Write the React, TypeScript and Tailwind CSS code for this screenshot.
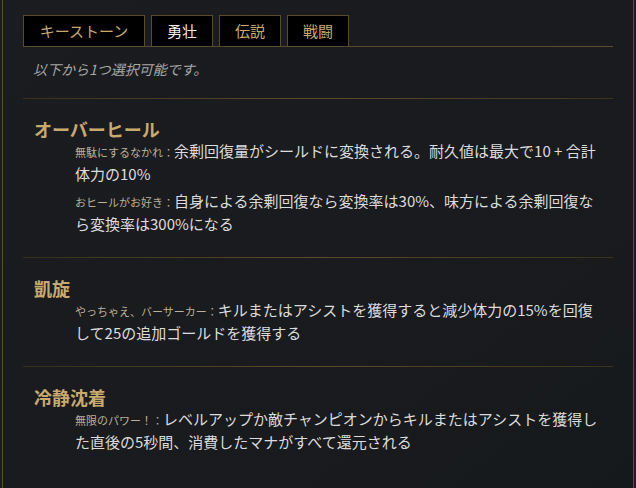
const TABS = [
  { label: 'キーストーン', active: false, width: 'w-[122px]' },
  { label: '勇壮', active: true, width: 'w-[62px]' },
  { label: '伝説', active: false, width: 'w-[62px]' },
  { label: '戦闘', active: false, width: 'w-[62px]' },
];

const RUNES = [
  {
    title: 'オーバーヒール',
    effects: [
      {
        label: '無駄にするなかれ：',
        lines: ['余剰回復量がシールドに変換される。耐久値は最大で10 + 合計', '体力の10%'],
      },
      {
        label: 'おヒールがお好き：',
        lines: ['自身による余剰回復なら変換率は30%、味方による余剰回復な', 'ら変換率は300%になる'],
      },
    ],
  },
  {
    title: '凱旋',
    effects: [
      {
        label: 'やっちゃえ、バーサーカー：',
        lines: ['キルまたはアシストを獲得すると減少体力の15%を回復', 'して25の追加ゴールドを獲得する'],
      },
    ],
  },
  {
    title: '冷静沈着',
    effects: [
      {
        label: '無限のパワー！：',
        lines: ['レベルアップか敵チャンピオンからキルまたはアシストを獲得し', 'た直後の5秒間、消費したマナがすべて還元される'],
      },
    ],
  },
];

function Divider() {
  return (
    <div className="h-px w-full bg-gradient-to-r from-[#3a2f18] via-[#5e4c27] to-[#3d321b]" />
  );
}

export default function App() {
  return (
    <div
      className="h-[488px] w-[636px] overflow-hidden bg-[#1b1c1f] px-[2px]"
      style={{ fontFamily: '"Noto Sans CJK JP", "Noto Sans", sans-serif' }}
    >
      <div className="h-full border-x border-[#5f4d25] bg-gradient-to-br from-[#1b1c1f] via-[#1a1b1e] to-[#16191b] px-5 pt-[15px]">
        <div className="flex gap-[6px] border-b border-[#5b4b2b]">
          {TABS.map((tab) => (
            <div
              key={tab.label}
              className={`${tab.width} flex h-[31px] items-center justify-center border-x border-t border-[#5b4b2b] bg-black text-[15px] ${
                tab.active ? 'text-[#f4efe4]' : 'text-[#c8aa6e]'
              }`}
            >
              {tab.label}
            </div>
          ))}
        </div>

        <p className="mt-[12px] mb-[19px] pl-[10px] text-[14px] leading-[20px] text-[#a7a7a7] italic">
          以下から1つ選択可能です。
        </p>

        {RUNES.map((rune) => (
          <section key={rune.title}>
            <Divider />
            <div className="pt-[18px] pb-[22px]">
              <h2 className="pl-[11px] text-[18px] leading-[24px] font-bold text-[#c8aa6e]">
                {rune.title}
              </h2>
              <div className="-mt-[2px] flex flex-col gap-[4px] pl-[52px]">
                {rune.effects.map((effect) => (
                  <p
                    key={effect.label}
                    className="text-[15px] leading-[23px] text-[#dcdcdc]"
                  >
                    <span className="text-[11px] leading-none text-[#bdb197]">
                      {effect.label}
                    </span>
                    {effect.lines[0]}
                    <br />
                    {effect.lines[1]}
                  </p>
                ))}
              </div>
            </div>
          </section>
        ))}
      </div>
    </div>
  );
}
